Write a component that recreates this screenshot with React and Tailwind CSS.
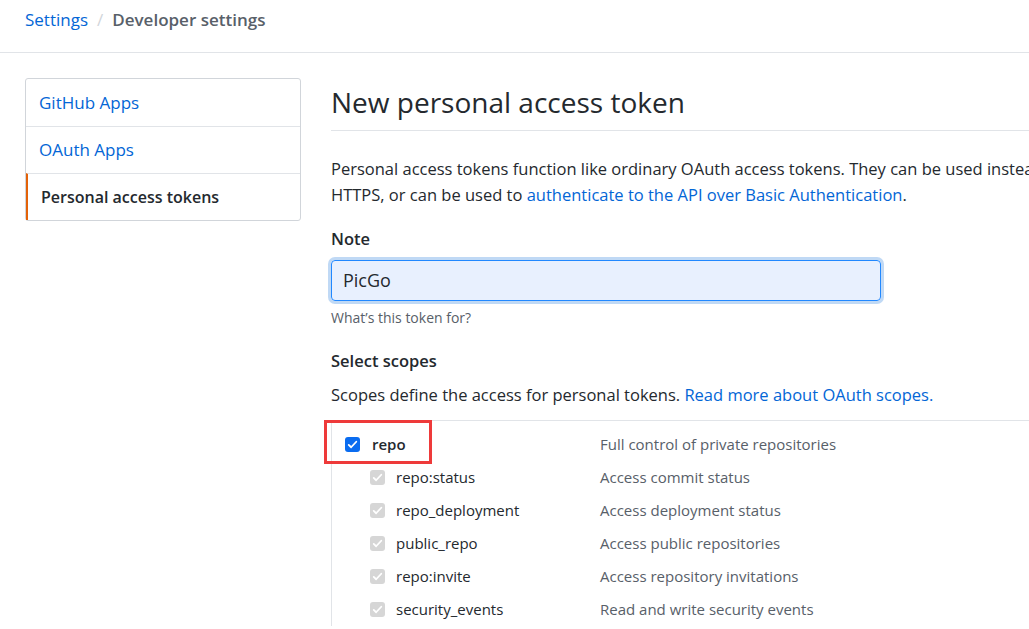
const font = { fontFamily: '"Open Sans", "Noto Sans", sans-serif' };

const sideItems = [
  { label: 'GitHub Apps' },
  { label: 'OAuth Apps' },
  { label: 'Personal access tokens', active: true },
];

const subScopes = [
  ['repo:status', 'Access commit status'],
  ['repo_deployment', 'Access deployment status'],
  ['public_repo', 'Access public repositories'],
  ['repo:invite', 'Access repository invitations'],
  ['security_events', 'Read and write security events'],
];

function Check({ disabled }) {
  return (
    <span
      className={
        'flex h-[15px] w-[15px] items-center justify-center rounded-[3px] ' +
        (disabled ? 'bg-[#d6d6d6]' : 'bg-[#0a6cf0]')
      }
    >
      <svg viewBox="0 0 16 16" className="h-[11px] w-[11px]">
        <path d="M2.5 8.5l3.5 3.5 7.5-8" fill="none" stroke="white" strokeWidth="2.6" strokeLinecap="round" strokeLinejoin="round" />
      </svg>
    </span>
  );
}

export default function App() {
  return (
    <div className="h-[629px] w-[1029px] overflow-hidden bg-white text-[#24292e]" style={font}>
      {/* Breadcrumb */}
      <div className="flex h-[53px] items-start border-b border-[#e1e4e8] pl-[25px] pt-[7px] text-[17px] leading-[26px]">
        <a className="text-[#0366d6]">Settings</a>
        <span className="mx-[9px] text-[#d1d5da]">/</span>
        <span className="font-semibold text-[#586069]">Developer settings</span>
      </div>

      <div className="flex pl-[25px] pt-[25px]">
        {/* Sidebar */}
        <nav className="h-[143px] w-[276px] shrink-0 rounded-[3px] border border-[#d1d5da]">
          {sideItems.map((item, i) => (
            <div
              key={item.label}
              className={
                'flex h-[47px] items-center pl-[13px] ' +
                (i > 0 ? 'border-t border-[#e1e4e8] ' : '') +
                (item.active
                  ? 'border-l-2 border-l-[#e36209] pl-[9px] text-[16px] font-semibold text-[#24292e]'
                  : 'text-[17px] text-[#0366d6]')
              }
            >
              {item.label}
            </div>
          ))}
        </nav>

        {/* Main */}
        <main className="ml-[30px] min-w-0 flex-1">
          <div className="border-b border-[#e1e4e8] pt-[6px] pb-[10px]">
            <h1 className="text-[28px] leading-[36px] font-normal">New personal access token</h1>
          </div>

          <p className="mt-[25px] whitespace-nowrap text-[16.5px] leading-[26px]">
            Personal access tokens function like ordinary OAuth access tokens. They can be used instead of a password for Git over
            <br />
            HTTPS, or can be used to <a className="text-[#0366d6]">authenticate to the API over Basic Authentication</a>.
          </p>

          <div className="mt-[19px] text-[16.5px] leading-[24px] font-semibold">Note</div>
          <div className="mt-[9px] w-[550px] rounded-[4px] shadow-[0_0_0_3px_rgba(3,102,214,0.25)]">
            <div className="flex h-[41px] items-center rounded-[4px] border border-[#2188ff] bg-[#e8f0fe] pl-[11px] text-[18px]">
              PicGo
            </div>
          </div>
          <div className="mt-[7px] text-[14px] leading-[20px] text-[#586069]">What’s this token for?</div>

          <div className="mt-[21px] text-[16.5px] leading-[24px] font-semibold">Select scopes</div>
          <p className="mt-[9px] text-[16.5px] leading-[26px]">
            Scopes define the access for personal tokens. <a className="text-[#0366d6]">Read more about OAuth scopes.</a>
          </p>

          <div className="relative mt-[12px] border-t border-l border-[#e1e4e8] pt-[7px]">
            <div className="absolute left-[-8px] top-[-1px] h-[44px] w-[108px] border-[3px] border-[#ee3a3a]" />
            <div className="flex h-[33px] items-center text-[15px]">
              <div className="flex w-[268px] items-center pl-[13px]">
                <Check />
                <span className="ml-[12px] font-semibold">repo</span>
              </div>
              <span className="text-[#586069]">Full control of private repositories</span>
            </div>
            {subScopes.map(([name, desc]) => (
              <div key={name} className="flex h-[33px] items-center text-[15px]">
                <div className="flex w-[268px] items-center pl-[38px]">
                  <Check disabled />
                  <span className="ml-[11px]">{name}</span>
                </div>
                <span className="text-[#586069]">{desc}</span>
              </div>
            ))}
          </div>
        </main>
      </div>
    </div>
  );
}
